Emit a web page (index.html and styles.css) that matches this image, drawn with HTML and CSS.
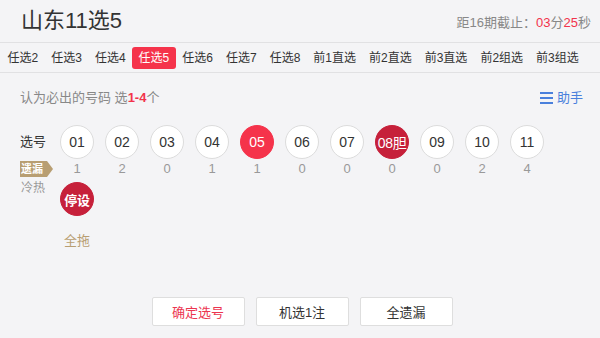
FILE: index.html
```html
<!DOCTYPE html>
<html lang="zh-CN">
<head>
<meta charset="utf-8">
<title>山东11选5</title>
<link rel="stylesheet" href="styles.css">
</head>
<body>
<header class="top">
  <h1 class="title">山东11选5</h1>
  <div class="deadline">距16期截止：<em>03</em>分<em>25</em>秒</div>
</header>
<nav class="tabs">
  <span class="tab">任选2</span>
  <span class="tab">任选3</span>
  <span class="tab">任选4</span>
  <span class="tab active">任选5</span>
  <span class="tab">任选6</span>
  <span class="tab">任选7</span>
  <span class="tab">任选8</span>
  <span class="tab">前1直选</span>
  <span class="tab">前2直选</span>
  <span class="tab">前3直选</span>
  <span class="tab">前2组选</span>
  <span class="tab">前3组选</span>
</nav>
<div class="intro">
  <div class="hint">认为必出的号码 选<b>1-4</b>个</div>
  <div class="helper">
    <svg class="menu-icon" width="13" height="12" viewBox="0 0 13 12"><rect x="0" y="0" width="13" height="2"/><rect x="0" y="5" width="13" height="2"/><rect x="0" y="10" width="13" height="2"/></svg>
    <span>助手</span>
  </div>
</div>
<section class="pick">
  <div class="side">
    <div class="side-label">选号</div>
    <div class="tag">遗漏</div>
    <div class="side-sub">冷热</div>
  </div>
  <div class="grid">
    <span class="ball">01</span>
    <span class="ball">02</span>
    <span class="ball">03</span>
    <span class="ball">04</span>
    <span class="ball on">05</span>
    <span class="ball">06</span>
    <span class="ball">07</span>
    <span class="ball dan">08胆</span>
    <span class="ball">09</span>
    <span class="ball">10</span>
    <span class="ball">11</span>
    <span class="miss">1</span>
    <span class="miss">2</span>
    <span class="miss">0</span>
    <span class="miss">1</span>
    <span class="miss">1</span>
    <span class="miss">0</span>
    <span class="miss">0</span>
    <span class="miss">0</span>
    <span class="miss">0</span>
    <span class="miss">2</span>
    <span class="miss">4</span>
    <span class="ball dan stop">停设</span>
    <span class="drag">全拖</span>
  </div>
</section>
<div class="actions">
  <button class="btn primary">确定选号</button>
  <button class="btn">机选1注</button>
  <button class="btn">全遗漏</button>
</div>
</body>
</html>
```

FILE: styles.css
```css
* { box-sizing: border-box; }
html, body { margin: 0; padding: 0; }
body {
  width: 600px;
  height: 338px;
  overflow: hidden;
  background: #f4f4f6;
  color: #333;
  font-family: "Liberation Sans", "Noto Sans CJK SC", sans-serif;
  font-size: 13px;
}
.top {
  height: 42px;
  display: flex;
  align-items: center;
  justify-content: space-between;
  padding: 0 9px 0 21px;
}
.title {
  margin: 0;
  font-size: 22px;
  font-weight: normal;
  color: #333;
  line-height: 1;
}
.deadline {
  color: #888;
  font-size: 13px;
  padding-top: 1px;
}
.deadline em {
  font-style: normal;
  color: #f2334b;
}
.tabs {
  height: 31px;
  border-top: 1px solid #e1e1e3;
  border-bottom: 1px solid #e1e1e3;
  display: flex;
  align-items: center;
  padding-left: 1px;
}
.tab {
  height: 22px;
  line-height: 22px;
  padding: 0 6.5px;
  font-size: 12px;
  color: #333;
  border-radius: 3px;
  white-space: nowrap;
}
.tab.active {
  background: #f5334b;
  color: #fff;
}
.intro {
  display: flex;
  justify-content: space-between;
  align-items: center;
  margin-top: 15px;
  padding: 0 17px 0 20px;
  line-height: 20px;
}
.hint { color: #888; }
.hint b { color: #f2334b; }
.helper {
  display: flex;
  align-items: center;
  gap: 4px;
  color: #4a80dc;
}
.menu-icon { fill: #4a80dc; display: block; }
.pick {
  display: flex;
  margin-top: 17px;
  padding-left: 20px;
}
.side {
  width: 40px;
  display: flex;
  flex-direction: column;
}
.side-label {
  height: 34px;
  line-height: 34px;
  color: #333;
}
.tag {
  margin-top: 2px;
  width: 33px;
  height: 16px;
  line-height: 16px;
  padding-left: 1px;
  font-size: 11px;
  font-weight: bold;
  color: #fff;
  background: #b89e72;
  clip-path: polygon(0 0, 27px 0, 100% 50%, 27px 100%, 0 100%);
}
.side-sub {
  margin-top: 3px;
  line-height: 16px;
  padding-left: 1px;
  font-size: 12px;
  color: #999;
}
.grid {
  display: grid;
  grid-template-columns: repeat(11, 34px);
  column-gap: 11px;
  align-content: start;
}
.ball {
  width: 34px;
  height: 34px;
  border-radius: 50%;
  border: 1px solid #dcdcdc;
  background: #fff;
  display: flex;
  align-items: center;
  justify-content: center;
  font-size: 14px;
  color: #333;
  white-space: nowrap;
}
.ball.on {
  background: #f5334b;
  border-color: #f5334b;
  color: #fff;
}
.ball.dan {
  background: #c6203a;
  border-color: #c6203a;
  color: #fff;
  letter-spacing: -0.3px;
}
.miss {
  text-align: center;
  line-height: 20px;
  color: #999;
  font-size: 13px;
}
.stop {
  grid-column: 1;
  margin-top: 3px;
  font-weight: bold;
  font-size: 13px;
  letter-spacing: 0;
}
.drag {
  grid-column: 1 / span 2;
  margin-top: 15px;
  line-height: 20px;
  width: 34px;
  text-align: center;
  color: #b89e72;
  white-space: nowrap;
}
.actions {
  display: flex;
  justify-content: center;
  gap: 11px;
  margin-top: 46px;
  padding-left: 4px;
}
.btn {
  width: 93px;
  height: 29px;
  border: 1px solid #dedede;
  border-radius: 2px;
  background: #fff;
  font-family: inherit;
  font-size: 13px;
  color: #333;
  padding: 0;
}
.btn.primary { color: #ec3550; }
```
